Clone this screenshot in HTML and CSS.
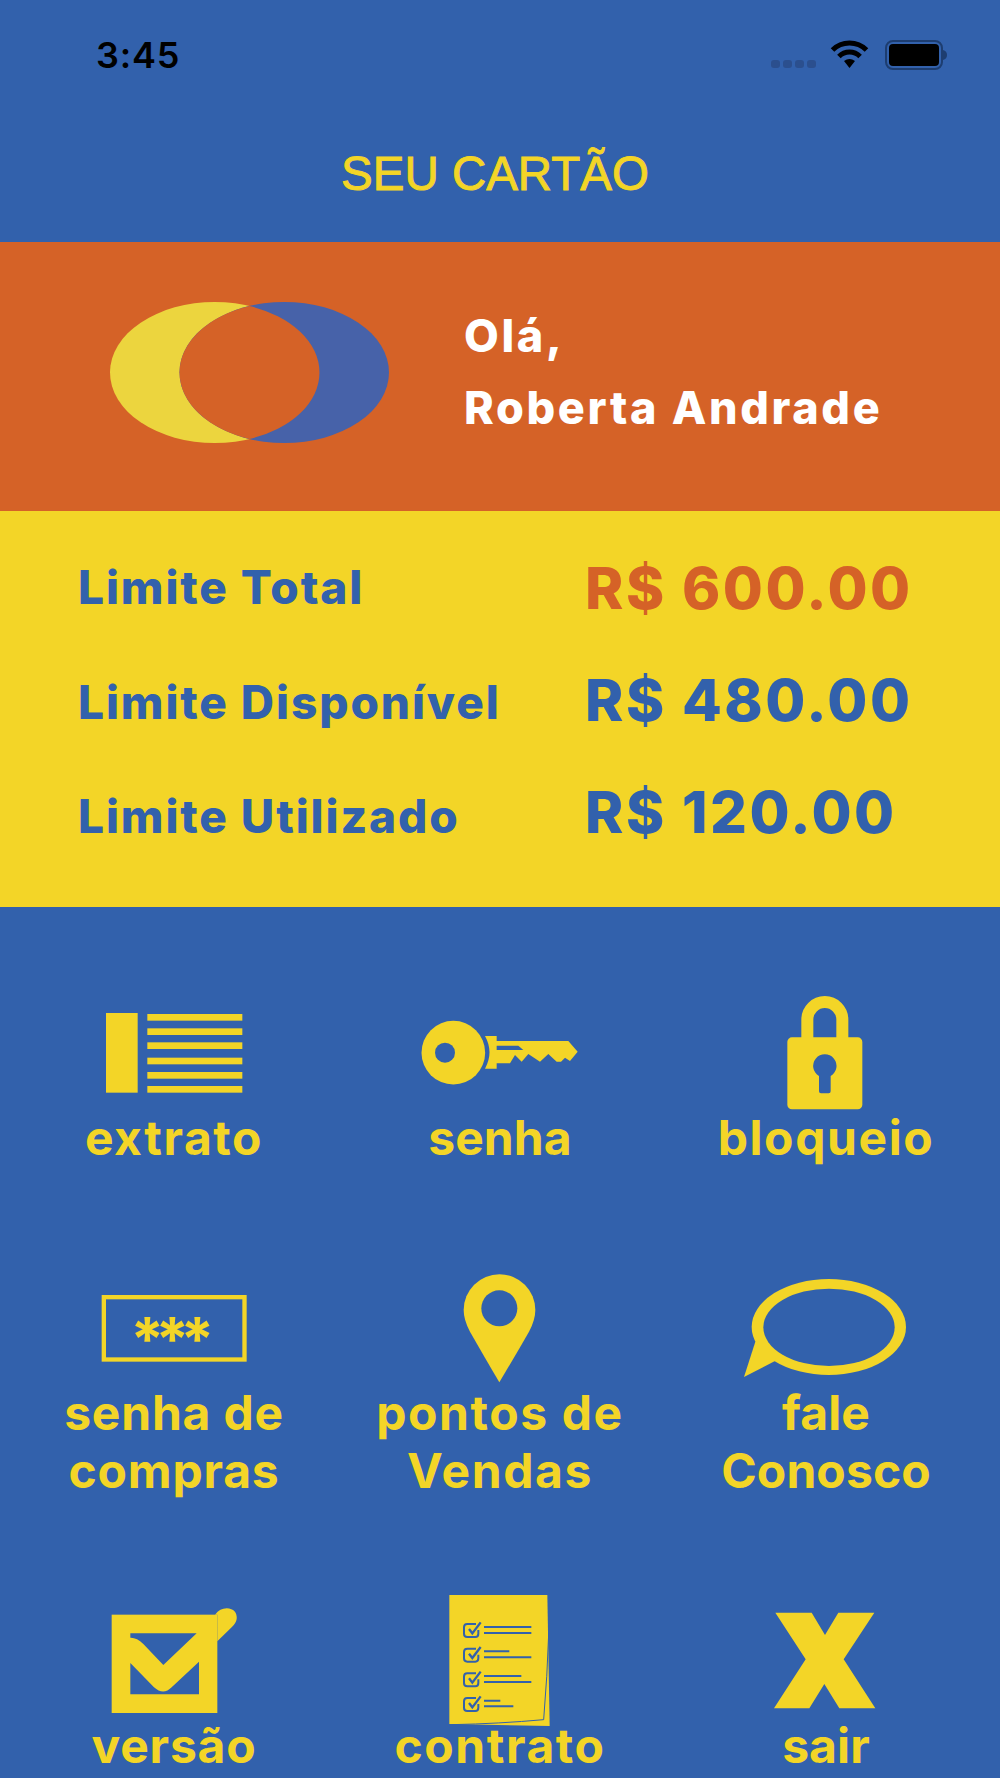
FILE: index.html
```html
<html>
<head>
<meta charset="utf-8">
<title>Seu cartão</title>
<link rel="stylesheet" href="styles.css">
</head>
<body>

<header class="top">
  <div class="status">
    <span class="time">3:45</span>
    <div class="status-icons">
      <div class="signal"><i></i><i></i><i></i><i></i></div>
      <svg class="wifi" viewBox="0 0 39 28" width="39" height="28">
        <path d="M2.5 10A24 24 0 0 1 36.5 10" fill="none" stroke="#000" stroke-width="5"/>
        <path d="M8.9 16.4A15 15 0 0 1 30.1 16.4" fill="none" stroke="#000" stroke-width="5"/>
        <path d="M19.5 28L14 21Q19.5 17 25 21Z" fill="#000"/>
      </svg>
      <svg class="battery" viewBox="0 0 62 30" width="62" height="30">
        <rect x="1" y="1" width="56" height="28" rx="7" fill="none" stroke="#1d3d70" stroke-width="2"/>
        <rect x="4" y="4" width="50" height="22" rx="4" fill="#000"/>
        <path d="M58 10Q62 11 62 15Q62 19 58 20Z" fill="#1d3d70"/>
      </svg>
    </div>
  </div>
  <h1 class="title">SEU CARTÃO</h1>
</header>

<section class="hero">
  <svg class="logo" viewBox="0 0 279 141" width="279" height="141">
    <ellipse cx="104.75" cy="70.5" rx="104.75" ry="70.5" fill="#ecd53e"/>
    <ellipse cx="174.25" cy="70.5" rx="104.75" ry="70.5" fill="#4762a9"/>
    <path d="M139.5 4A104.75 70.5 0 0 1 139.5 137A104.75 70.5 0 0 1 139.5 4Z" fill="#d56227"/>
  </svg>
  <div class="hello">
    <div>Olá,</div>
    <div>Roberta Andrade</div>
  </div>
</section>

<section class="limits">
  <div class="limit-labels">
    <div>Limite Total</div>
    <div>Limite Disponível</div>
    <div>Limite Utilizado</div>
  </div>
  <div class="limit-values">
    <div class="total">R$ 600.00</div>
    <div>R$ 480.00</div>
    <div>R$ 120.00</div>
  </div>
</section>

<nav class="menu">

  <a class="item wide">
    <svg class="ico" viewBox="-177 18 978 372">
      <rect x="108" y="99" width="95" height="239"/>
      <rect x="232" y="102" width="285" height="20"/>
      <rect x="232" y="145" width="285" height="20"/>
      <rect x="232" y="187" width="285" height="20"/>
      <rect x="232" y="233" width="285" height="20"/>
      <rect x="232" y="276" width="285" height="20"/>
      <rect x="232" y="318" width="285" height="20"/>
    </svg>
    <span>extrato</span>
  </a>

  <a class="item snug">
    <svg class="ico" viewBox="-189 18 978 372">
      <circle cx="160" cy="218" r="95.5"/>
      <path d="M255 168H290V183H505L533 215L510 243L495 233L483 245H470L445 222L420 245L385 222L365 245L345 225L330 250H290V266H255Q282 217 255 168Z"/>
      <circle class="hole" cx="135" cy="218" r="30"/>
      <path class="hole" d="M290 197H355L370 210H290Z"/>
    </svg>
    <span>senha</span>
  </a>

  <a class="item wide">
    <svg class="ico" viewBox="-111 18 978 372">
      <path d="M322 180V118.500A52.500 52.500 0 0 1 427 118.500V180" fill="none" stroke="#f3d527" stroke-width="36"/>
      <rect x="262" y="172" width="225" height="216" rx="14"/>
      <path class="hole" d="M357 288A35 35 0 1 1 392 288V334Q392 340 386 340H363Q357 340 357 334Z"/>
    </svg>
    <span>bloqueio</span>
  </a>

  <a class="item">
    <svg class="ico" viewBox="-117 3 978 372">
      <defs>
        <g id="star">
          <path id="arm" d="M-6 0L-9 -37H9L6 0Z"/>
          <use href="#arm" transform="rotate(60)"/>
          <use href="#arm" transform="rotate(120)"/>
          <use href="#arm" transform="rotate(180)"/>
          <use href="#arm" transform="rotate(240)"/>
          <use href="#arm" transform="rotate(300)"/>
          <circle r="12"/>
        </g>
      </defs>
      <rect x="161.500" y="111.500" width="422" height="187" fill="none" stroke="#f3d527" stroke-width="13"/>
      <use href="#star" x="292" y="208"/>
      <use href="#star" x="367" y="208"/>
      <use href="#star" x="442" y="208"/>
    </svg>
    <span>senha de<br>compras</span>
  </a>

  <a class="item wide">
    <svg class="ico" viewBox="-99 3 978 372">
      <path d="M388 367Q340 285 300 215Q281 180 281 150A107.500 107.500 0 0 1 496 150Q496 180 477 215Q437 285 388 367Z"/>
      <circle class="hole" cx="388" cy="145" r="54"/>
    </svg>
    <span>pontos de<br>Vendas</span>
  </a>

  <a class="item snug">
    <svg class="ico" viewBox="-111 3 978 372">
      <ellipse cx="386.500" cy="201" rx="231.500" ry="144"/>
      <path d="M166 245L132 351L225 303L240 260Z"/>
      <ellipse class="hole" cx="387" cy="202" rx="197" ry="116"/>
    </svg>
    <span>fale<br>Conosco</span>
  </a>

  <a class="item">
    <svg class="ico" viewBox="-207 15 978 372">
      <rect x="95" y="77" width="317" height="295"/>
      <path d="M405 77Q420 58 440 58Q472 60 470 90Q468 103 455 115L412 157V77Z"/>
      <path class="hole" d="M151 133H350L250 228L190 165Q170 145 151 146Z"/>
      <path class="hole" d="M151 222L222 295Q250 320 275 295L357 218V316H151Z"/>
    </svg>
    <span>versão</span>
  </a>

  <a class="item wide">
    <svg class="ico" viewBox="-159 15 978 372">
      <defs>
        <g id="tick">
          <path d="M258 105H232Q222 105 222 115V134Q222 144 232 144H256Q265 144 265 134V123" fill="none" stroke="#3261ac" stroke-width="6"/>
          <path d="M237 120L247 133L272 100" fill="none" stroke="#3261ac" stroke-width="7"/>
        </g>
      </defs>
      <path d="M178 18H472L479 411L178 405Z"/>
      <path d="M476 135Q472 260 461 392Q330 404 185 407" fill="none" stroke="#3261ac" stroke-width="3"/>
      <use href="#tick"/>
      <use href="#tick" y="74"/>
      <use href="#tick" y="148"/>
      <use href="#tick" y="222"/>
      <path class="rule" d="M282 114H424M282 132H424M282 187H358M282 205H424M282 261H394M282 279H424M282 335H331M282 352H370"/>
    </svg>
    <span>contrato</span>
  </a>

  <a class="item snug">
    <svg class="ico" viewBox="-231 15 978 372">
      <path d="M106 71H215L255 138L295 71H403L311 211L406 358H298L253 285L208 358H102L197 211Z"/>
    </svg>
    <span>sair</span>
  </a>

</nav>

</body>
</html>
```

FILE: styles.css
```css
* {
  box-sizing: border-box;
}

html, body {
  margin: 0;
  padding: 0;
}

body {
  width: 1000px;
  height: 1778px;
  overflow: hidden;
  background: #3261ac;
  font-family: "Inter", "Liberation Sans", sans-serif;
  font-weight: 800;
  color: #f3d527;
}

/* top bar */
.top {
  height: 242px;
}

.status {
  display: flex;
  justify-content: space-between;
  padding: 34px 53px 0 96px;
}

.time {
  color: #000;
  font-size: 36px;
  font-weight: 600;
  line-height: 42px;
  letter-spacing: 0.8px;
}

.status-icons {
  display: flex;
  align-items: flex-start;
  padding-top: 6px;
}

.signal {
  display: flex;
  gap: 3px;
  margin: 20px 14px 0 0;
}

.signal i {
  width: 9px;
  height: 8px;
  border-radius: 3px;
  background: #2b4f8e;
}

.battery {
  margin-left: 16px;
}

.title {
  margin: 0;
  padding: 70px 10px 0 0;
  text-align: center;
  font-family: "Liberation Sans", sans-serif;
  font-size: 47.5px;
  font-weight: 400;
  line-height: 56px;
  -webkit-text-stroke: 0.9px #f3d527;
}

/* orange band */
.hero {
  display: flex;
  align-items: flex-start;
  height: 269px;
  padding: 60px 0 0 110px;
  background: #d56227;
}

.hello {
  margin: -2px 0 0 75px;
  color: #fff;
  font-size: 45px;
  line-height: 72px;
  letter-spacing: 2.65px;
}

/* yellow band */
.limits {
  display: flex;
  height: 396px;
  padding: 19px 0 0 78px;
  background: #f3d527;
  color: #3261ac;
}

.limit-labels {
  width: 507px;
  font-size: 46px;
  line-height: 114.5px;
  letter-spacing: 1.9px;
}

.limit-values {
  padding-top: 2px;
  font-size: 58px;
  line-height: 112px;
  letter-spacing: 2.5px;
}

.total {
  color: #d56227;
}

/* icon grid */
.menu {
  display: grid;
  grid-template-columns: repeat(3, 326px);
  justify-content: center;
  row-gap: 94px;
  padding-top: 79px;
}

.item {
  display: block;
  text-align: center;
  font-size: 48px;
  font-weight: 700;
  line-height: 58px;
  letter-spacing: 0.8px;
}

.item span {
  display: block;
  margin-top: -1px;
}

.wide {
  letter-spacing: 1.6px;
}

.snug {
  letter-spacing: 0.1px;
}

.ico {
  display: block;
  width: 326px;
  height: 124px;
  overflow: visible;
  fill: #f3d527;
}

.ico .hole {
  fill: #3261ac;
}

.ico .rule {
  fill: none;
  stroke: #3261ac;
  stroke-width: 6;
}
```
